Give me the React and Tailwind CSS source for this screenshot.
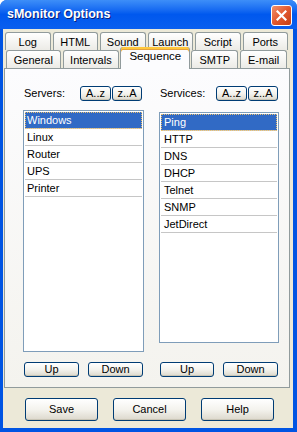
import { useState } from 'react';

const ROW1 = ['Log', 'HTML', 'Sound', 'Launch', 'Script', 'Ports'];
const ROW2 = [
    { label: 'General', w: 'w-[56px]' },
    { label: 'Intervals', w: 'w-[58px]' },
    { label: 'Sequence', w: 'w-[72px]', active: true },
    { label: 'SMTP', w: 'w-[48px]' },
    { label: 'E-mail', w: 'w-[48px]' },
];
const SERVERS = ['Windows', 'Linux', 'Router', 'UPS', 'Printer'];
const SERVICES = ['Ping', 'HTTP', 'DNS', 'DHCP', 'Telnet', 'SNMP', 'JetDirect'];

function XpButton({ children, className = '' }) {
    return (
        <button className={`flex items-center justify-center border border-[#003c74] rounded-[3px] bg-gradient-to-b from-white via-[#f4f3ee] to-[#dcd8cc] shadow-[inset_0_-1px_0_#c9c5b6] text-[11px] leading-none text-black ${className}`}>
            {children}
        </button>
    );
}

function ListBox({ items, selected, onSelect, height, textPad }) {
    return (
        <div className={`border border-[#7f9db9] bg-white p-[1px] ${height}`}>
            {items.map(item => (
                <div
                    key={item}
                    onClick={() => onSelect(item)}
                    className={`h-[17px] flex items-center border-b border-[#c6c6c6] ${textPad} ${selected === item ? 'bg-[#316ac5] text-white outline outline-1 outline-dotted outline-[#e8c070] -outline-offset-1' : 'text-black'}`}
                >
                    {item}
                </div>
            ))}
        </div>
    );
}

function Column({ label, items, listHeight, listTop, textPad, upW }) {
    const [selected, setSelected] = useState(items[0]);
    return (
        <div className="h-[291px] flex flex-col">
            <div className="h-[15px] flex items-center">
                <span className="w-[57px] pl-[1px]">{label}</span>
                <XpButton className="w-[31px] h-[15px]">A..z</XpButton>
                <XpButton className="w-[30px] h-[15px] ml-[1px]">z..A</XpButton>
            </div>
            <div className={listTop}>
                <ListBox items={items} selected={selected} onSelect={setSelected} height={listHeight} textPad={textPad} />
            </div>
            <div className="mt-auto flex gap-[9px] pl-[1px]">
                <XpButton className={`${upW} h-[15px]`}>Up</XpButton>
                <XpButton className="w-[55px] h-[15px]">Down</XpButton>
            </div>
        </div>
    );
}

export default function App() {
    return (
        <div className="w-[297px] h-[432px] flex flex-col bg-[#0054e3] rounded-t-[7px] font-['Liberation_Sans',Arial,sans-serif] text-[11px] text-black">
            <div className="h-[29px] flex items-center justify-between pl-[7px] pr-[5px] rounded-t-[7px] bg-gradient-to-b from-[#3d8ef8] via-[#0058ee] to-[#0a5fef]">
                <span className="text-white font-bold text-[12.5px] [text-shadow:1px_1px_0_#0a1e7a]">sMonitor Options</span>
                <div className="w-[21px] h-[21px] mt-[1px] rounded-[3px] border border-white bg-gradient-to-br from-[#f0906a] via-[#e2582e] to-[#c43e14] flex items-center justify-center">
                    <svg width="11" height="11" viewBox="0 0 11 11">
                        <path d="M1.5 1.5 L9.5 9.5 M9.5 1.5 L1.5 9.5" stroke="white" strokeWidth="2.2" strokeLinecap="square" />
                    </svg>
                </div>
            </div>

            <div className="flex-1 ml-[3px] mr-[4px] mb-[4px] bg-[#ece9d8] flex flex-col pl-[1px] pr-[3px] pt-[3px]">
                <div className="pl-[1px] pr-[2px]">
                    <div className="flex gap-[2px] h-[18px]">
                        {ROW1.map(t => (
                            <div key={t} className="flex-1 flex items-center justify-center pt-[1px] border border-b-0 border-[#919b9c] rounded-t-[3px] bg-gradient-to-b from-white to-[#ecebe6]">
                                {t}
                            </div>
                        ))}
                    </div>
                    <div className="flex items-end h-[18px]">
                        {ROW2.map(t => t.active ? (
                            <div key={t.label} className={`${t.w} h-[22px] -mb-[1px] relative z-10 flex items-center justify-center pb-[3px] border border-b-0 border-[#919b9c] border-t-0 rounded-t-[3px] bg-[#fcfcfe] shadow-[inset_0_2px_0_#ffc83c,inset_0_3px_0_#e6a23c] text-[11.5px]`}>
                                {t.label}
                            </div>
                        ) : (
                            <div key={t.label} className={`${t.w} h-[18px] flex items-center justify-center pt-[1px] mx-[1px] border border-b-0 border-[#919b9c] rounded-t-[3px] bg-gradient-to-b from-white to-[#ecebe6]`}>
                                {t.label}
                            </div>
                        ))}
                    </div>
                </div>

                <div className="h-[320px] border border-[#919b9c] bg-gradient-to-b from-[#fcfcfe] to-[#f4f3ee] pt-[17px] pl-[18px]">
                    <div className="grid grid-cols-[121px_120px] gap-x-[15px]">
                        <Column label="Servers:" items={SERVERS} listHeight="h-[242px]" listTop="mt-[9px]" textPad="pl-[2px]" upW="w-[55px]" />
                        <Column label="Services:" items={SERVICES} listHeight="h-[231px]" listTop="mt-[11px]" textPad="pl-[3px]" upW="w-[54px]" />
                    </div>
                </div>

                <div className="mt-[10px] pl-[21px] flex gap-[15px]">
                    <XpButton className="w-[73px] h-[23px] text-[11.5px]">Save</XpButton>
                    <XpButton className="w-[73px] h-[23px] text-[11.5px]">Cancel</XpButton>
                    <XpButton className="w-[73px] h-[23px] text-[11.5px]">Help</XpButton>
                </div>
            </div>
        </div>
    );
}
